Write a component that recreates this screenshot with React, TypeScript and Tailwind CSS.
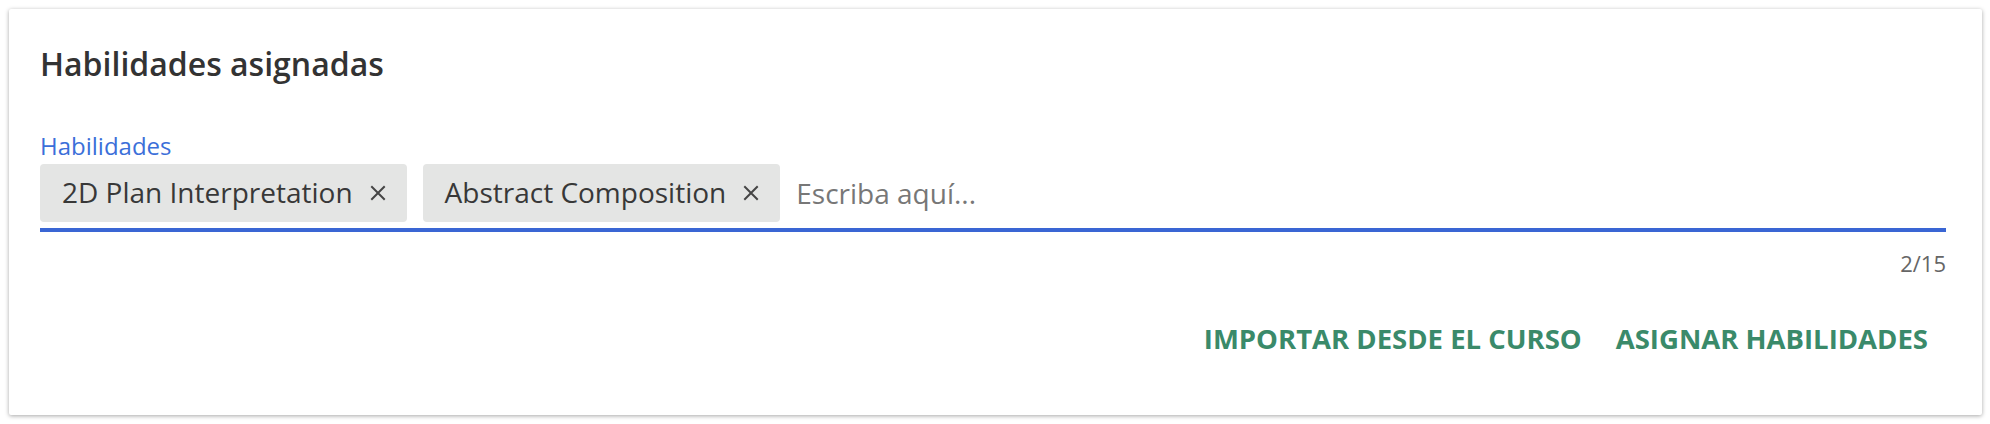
import { useState } from "react";

const FONT = { fontFamily: '"Open Sans", "Noto Sans", sans-serif' };

function CloseIcon() {
  return (
    <svg width="16" height="16" viewBox="0 0 16 16" className="shrink-0">
      <path d="M2 2 L14 14 M14 2 L2 14" stroke="#454545" strokeWidth="2" strokeLinecap="square" />
    </svg>
  );
}

function Chip({ label, onRemove }: { label: string; onRemove: () => void }) {
  return (
    <div className="flex h-[58px] items-center gap-[17px] rounded-[4px] bg-[#e4e5e4] pl-[22px] pr-[21px]">
      <span className="text-[28px] leading-[38px] text-[#383838] -translate-y-[1px]">{label}</span>
      <button type="button" onClick={onRemove} className="flex items-center">
        <CloseIcon />
      </button>
    </div>
  );
}

export default function App() {
  const [skills, setSkills] = useState(["2D Plan Interpretation", "Abstract Composition"]);

  return (
    <div className="bg-white p-[9px]" style={FONT}>
      <div className="h-[406px] w-[1973px] rounded-[2px] bg-white pl-[31px] pr-[36px] pt-[33px] shadow-[0_1px_4px_rgba(0,0,0,0.35)]">
        <h2 className="text-[32px] font-semibold leading-[44px] text-[#333333]">Habilidades asignadas</h2>

        <label className="mt-[44px] block text-[24px] font-medium leading-[32px] text-[#3b6fd9]">Habilidades</label>
        <div className="mt-[2px] flex items-center gap-[16px] border-b-[4px] border-[#3a66d4] pb-[6px]">
          {skills.map((s) => (
            <Chip key={s} label={s} onRemove={() => setSkills(skills.filter((x) => x !== s))} />
          ))}
          <input
            className="min-w-0 flex-1 bg-transparent text-[28px] leading-[38px] text-[#333] outline-none placeholder:text-[#777]"
            placeholder="Escriba aquí..."
            style={FONT}
          />
        </div>
        <div className="mt-[16px] text-right text-[22px] leading-[30px] text-[#666]">{skills.length}/15</div>

        <div className="mt-[42px] flex justify-end gap-[34px] pr-[18px]">
          <button type="button" className="text-[27.5px] font-bold leading-[38px] text-[#3a8a6a]">
            IMPORTAR DESDE EL CURSO
          </button>
          <button type="button" className="text-[27.5px] font-bold leading-[38px] text-[#3a8a6a]">
            ASIGNAR HABILIDADES
          </button>
        </div>
      </div>
    </div>
  );
}
